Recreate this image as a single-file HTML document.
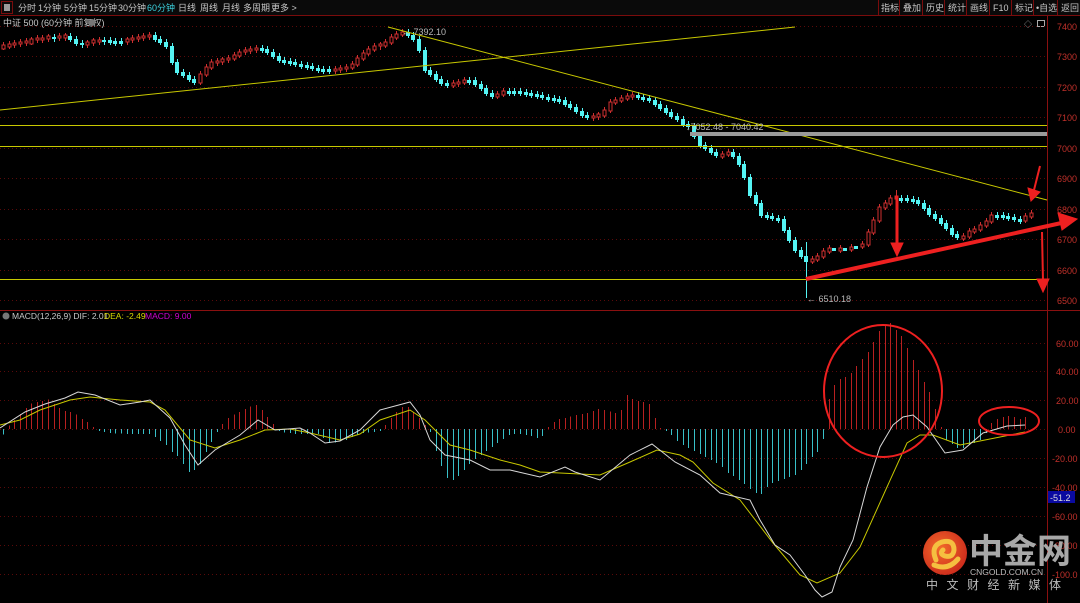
<!DOCTYPE html>
<html><head><meta charset="utf-8"><style>
html,body{margin:0;padding:0;background:#000;width:1080px;height:603px;overflow:hidden;font-family:"Liberation Sans","Noto Sans CJK SC",sans-serif}
svg{display:block}
</style></head><body>
<svg width="1080" height="603" xmlns="http://www.w3.org/2000/svg" font-family="Liberation Sans, Noto Sans CJK SC, sans-serif">
<rect width="1080" height="603" fill="#000"/>
<defs><radialGradient id="lg" cx="0.4" cy="0.4" r="0.7"><stop offset="0" stop-color="#f26a2a"/><stop offset="1" stop-color="#c9261b"/></radialGradient></defs>
<rect x="0" y="0" width="1080" height="15" fill="#0a0a0a"/>
<line x1="0" y1="15.5" x2="1080" y2="15.5" stroke="#7a0c0c"/>
<rect x="1.5" y="1.5" width="11" height="12" fill="none" stroke="#7a0c0c"/>
<rect x="4" y="4" width="6" height="7" fill="#999"/>
<g font-size="9" fill="#c8c8c8">
<text x="18" y="11">分时</text><text x="38" y="11">1分钟</text><text x="64" y="11">5分钟</text><text x="89" y="11">15分钟</text><text x="118" y="11">30分钟</text><text x="147" y="11" fill="#3cd4e0">60分钟</text><text x="178" y="11">日线</text><text x="200" y="11">周线</text><text x="222" y="11">月线</text><text x="243" y="11">多周期</text><text x="271" y="11">更多 &gt;</text>
<text x="881" y="11">指标</text><text x="903" y="11">叠加</text><text x="926" y="11">历史</text><text x="948" y="11">统计</text><text x="970" y="11">画线</text><text x="993" y="11">F10</text><text x="1015" y="11">标记</text><text x="1036" y="11">•自选</text><text x="1061" y="11">返回</text>
</g>
<g stroke="#7a0c0c"><line x1="878.5" y1="0" x2="878.5" y2="15"/><line x1="899.5" y1="0" x2="899.5" y2="15"/><line x1="922.5" y1="0" x2="922.5" y2="15"/><line x1="944.5" y1="0" x2="944.5" y2="15"/><line x1="966.5" y1="0" x2="966.5" y2="15"/><line x1="989.5" y1="0" x2="989.5" y2="15"/><line x1="1011.5" y1="0" x2="1011.5" y2="15"/><line x1="1033.5" y1="0" x2="1033.5" y2="15"/><line x1="1057.5" y1="0" x2="1057.5" y2="15"/></g>
<text x="3" y="26" font-size="9" fill="#c8c8c8">中证 500 (60分钟 前复权)</text>
<circle cx="92" cy="22.5" r="3.5" fill="#777"/>
<text x="1024" y="27" font-size="8" fill="#aaa">◇</text><rect x="1037.5" y="20.5" width="7" height="6" fill="none" stroke="#aaa"/>

<!-- grid -->
<g stroke="#5a0a0a" stroke-dasharray="1,3">
<line x1="0" y1="26.5" x2="1047" y2="26.5"/><line x1="0" y1="56.5" x2="1047" y2="56.5"/><line x1="0" y1="87.5" x2="1047" y2="87.5"/><line x1="0" y1="117.5" x2="1047" y2="117.5"/><line x1="0" y1="148.5" x2="1047" y2="148.5"/><line x1="0" y1="178.5" x2="1047" y2="178.5"/><line x1="0" y1="209.5" x2="1047" y2="209.5"/><line x1="0" y1="239.5" x2="1047" y2="239.5"/><line x1="0" y1="270.5" x2="1047" y2="270.5"/><line x1="0" y1="300.5" x2="1047" y2="300.5"/>
<line x1="0" y1="343.5" x2="1047" y2="343.5"/><line x1="0" y1="371.5" x2="1047" y2="371.5"/><line x1="0" y1="400.5" x2="1047" y2="400.5"/><line x1="0" y1="429.5" x2="1047" y2="429.5"/><line x1="0" y1="458.5" x2="1047" y2="458.5"/><line x1="0" y1="487.5" x2="1047" y2="487.5"/><line x1="0" y1="516.5" x2="1047" y2="516.5"/><line x1="0" y1="545.5" x2="1047" y2="545.5"/><line x1="0" y1="574.5" x2="1047" y2="574.5"/>
</g>
<g font-size="9" fill="#c0302a">
<text x="1057" y="30">7400</text><text x="1057" y="60">7300</text><text x="1057" y="91">7200</text><text x="1057" y="121">7100</text><text x="1057" y="152">7000</text><text x="1057" y="182">6900</text><text x="1057" y="213">6800</text><text x="1057" y="243">6700</text><text x="1057" y="274">6600</text><text x="1057" y="304">6500</text>
<text x="1056" y="347">60.00</text><text x="1056" y="375">40.00</text><text x="1056" y="404">20.00</text><text x="1058" y="433">0.00</text><text x="1052" y="462">-20.00</text><text x="1052" y="491">-40.00</text><text x="1052" y="520">-60.00</text><text x="1052" y="549">-80.00</text><text x="1052" y="578">-100.0</text>
</g>
<line x1="0" y1="310.5" x2="1080" y2="310.5" stroke="#8a1010"/>
<line x1="1047.5" y1="16" x2="1047.5" y2="603" stroke="#8a1010"/>

<!-- candles: wicks -->
<path stroke="#d03030" fill="none" d="M3.5,42V50M9.5,41V49M14.5,40V48M20.5,39V47M26.5,38V46M31.5,37V45M37.5,35V43M42.5,35V43M48.5,34V42M59.5,33V41M65.5,33V41M87.5,40V48M93.5,38V46M99.5,37V45M127.5,37V45M132.5,35V43M138.5,34V42M143.5,33V41M149.5,32V40M200.5,71V85M206.5,64V77M211.5,59V70M217.5,58V66M222.5,57V65M228.5,55V63M234.5,52V61M239.5,49V58M245.5,47V55M250.5,46V54M256.5,45V53M335.5,66V74M340.5,65V73M346.5,64V72M352.5,61V70M357.5,55V67M363.5,50V61M368.5,46V56M374.5,43V52M380.5,42V50M385.5,39V48M391.5,34V45M396.5,31V40M402.5,29V37M453.5,80V88M458.5,79V87M464.5,77V85M497.5,91V99M503.5,88V97M593.5,113V121M598.5,112V120M604.5,107V118M610.5,99V113M615.5,97V105M621.5,95V103M627.5,93V101M632.5,92V100M722.5,151V159M728.5,149V157M812.5,256V264M817.5,253V262M823.5,248V259M829.5,245V254M840.5,245V253M851.5,244V252M862.5,241V249M868.5,229V247M873.5,217V235M879.5,204V223M885.5,200V210M890.5,195V206M896.5,190V203M963.5,233V241M969.5,228V239M974.5,226V234M980.5,222V232M986.5,218V228M991.5,212V224M1025.5,213V223M1031.5,210V219"/>
<path stroke="#54f4f4" fill="none" d="M54.5,34V42M70.5,33V42M76.5,36V46M82.5,40V48M104.5,37V45M110.5,37V45M115.5,38V46M121.5,38V46M155.5,32V42M160.5,36V45M166.5,39V49M172.5,43V65M177.5,59V75M183.5,69V78M189.5,72V82M194.5,76V85M262.5,45V53M267.5,46V55M273.5,49V59M279.5,53V63M284.5,57V65M290.5,58V66M295.5,59V67M301.5,61V69M307.5,62V70M312.5,63V71M318.5,65V73M323.5,66V74M329.5,66V74M408.5,29V38M413.5,32V42M419.5,36V53M425.5,47V73M430.5,67V77M436.5,71V82M441.5,76V86M447.5,80V88M469.5,77V85M475.5,77V87M481.5,81V91M486.5,85V96M492.5,90V99M509.5,88V96M514.5,88V96M520.5,88V96M526.5,89V97M531.5,90V98M537.5,91V99M542.5,92V100M548.5,94V102M554.5,95V103M559.5,96V104M565.5,97V107M570.5,101V110M576.5,104V114M582.5,108V118M587.5,112V120M638.5,92V100M643.5,94V102M649.5,95V103M655.5,97V107M660.5,101V111M666.5,105V115M671.5,109V119M677.5,113V122M683.5,116V127M688.5,121V129M694.5,123V139M700.5,133V148M705.5,142V151M711.5,145V155M716.5,149V158M733.5,149V159M739.5,153V167M744.5,161V180M750.5,174V198M756.5,192V206M761.5,200V218M767.5,212V220M772.5,213V221M778.5,215V223M784.5,216V233M789.5,227V243M795.5,237V253M801.5,247V259M806.5,242V298M901.5,195V203M907.5,195V203M913.5,196V204M918.5,197V206M924.5,200V211M929.5,205V217M935.5,211V221M941.5,215V226M946.5,220V231M952.5,225V237M957.5,231V240M997.5,212V220M1003.5,212V220M1008.5,213V221M1014.5,214V222M1020.5,216V224"/>
<!-- red hollow bodies -->
<path stroke="#d03030" fill="#000" d="M2,45h3v4h-3zM8,44h3v3h-3zM13,43h3v2h-3zM19,42h3v2h-3zM25,41h3v2h-3zM30,39h3v5h-3zM36,38h3v2h-3zM41,38h3v2h-3zM47,36h3v3h-3zM58,36h3v2h-3zM64,35h3v3h-3zM86,42h3v3h-3zM92,40h3v3h-3zM98,40h3v2h-3zM126,39h3v3h-3zM131,38h3v2h-3zM137,37h3v2h-3zM142,36h3v2h-3zM148,35h3v2h-3zM199,74h3v9h-3zM205,67h3v8h-3zM210,62h3v6h-3zM216,61h3v2h-3zM221,59h3v3h-3zM227,58h3v2h-3zM233,55h3v4h-3zM238,52h3v4h-3zM244,50h3v2h-3zM249,49h3v2h-3zM255,48h3v2h-3zM334,69h3v2h-3zM339,68h3v2h-3zM345,67h3v2h-3zM351,64h3v4h-3zM356,58h3v7h-3zM362,53h3v6h-3zM367,49h3v5h-3zM373,46h3v4h-3zM379,44h3v2h-3zM384,42h3v4h-3zM390,37h3v6h-3zM395,34h3v4h-3zM401,32h3v3h-3zM452,83h3v3h-3zM457,82h3v2h-3zM463,80h3v3h-3zM496,94h3v3h-3zM502,91h3v4h-3zM592,116h3v2h-3zM597,114h3v3h-3zM603,110h3v6h-3zM609,102h3v9h-3zM614,100h3v3h-3zM620,98h3v3h-3zM626,96h3v3h-3zM631,95h3v2h-3zM721,154h3v3h-3zM727,152h3v3h-3zM811,259h3v3h-3zM816,256h3v4h-3zM822,251h3v6h-3zM828,248h3v4h-3zM839,248h3v3h-3zM850,247h3v3h-3zM861,244h3v3h-3zM867,232h3v13h-3zM872,220h3v13h-3zM878,207h3v14h-3zM884,203h3v5h-3zM889,198h3v6h-3zM895,196h3v3h-3zM962,236h3v3h-3zM968,231h3v6h-3zM973,229h3v3h-3zM979,225h3v5h-3zM985,221h3v5h-3zM990,215h3v7h-3zM1024,216h3v5h-3zM1030,213h3v4h-3z"/>
<!-- cyan bodies -->
<path fill="#54f4f4" d="M52,37h4v2h-4zM68,36h4v4h-4zM74,39h4v5h-4zM80,43h4v2h-4zM102,40h4v2h-4zM108,40h4v3h-4zM113,41h4v3h-4zM119,41h4v3h-4zM153,35h4v5h-4zM158,39h4v4h-4zM164,42h4v5h-4zM170,46h4v17h-4zM175,62h4v11h-4zM181,72h4v4h-4zM187,75h4v5h-4zM192,79h4v4h-4zM260,48h4v3h-4zM265,49h4v4h-4zM271,52h4v5h-4zM277,56h4v5h-4zM282,60h4v3h-4zM288,61h4v3h-4zM293,62h4v3h-4zM299,64h4v3h-4zM305,65h4v3h-4zM310,66h4v3h-4zM316,68h4v3h-4zM321,69h4v3h-4zM327,69h4v3h-4zM406,32h4v4h-4zM411,35h4v5h-4zM417,39h4v12h-4zM423,50h4v21h-4zM428,70h4v5h-4zM434,74h4v6h-4zM439,79h4v5h-4zM445,83h4v3h-4zM467,80h4v3h-4zM473,80h4v5h-4zM479,84h4v5h-4zM484,88h4v6h-4zM490,93h4v4h-4zM507,91h4v3h-4zM512,91h4v3h-4zM518,91h4v3h-4zM524,92h4v3h-4zM529,93h4v3h-4zM535,94h4v3h-4zM540,95h4v3h-4zM546,97h4v3h-4zM552,98h4v3h-4zM557,99h4v3h-4zM563,100h4v5h-4zM568,104h4v4h-4zM574,107h4v5h-4zM580,111h4v5h-4zM585,115h4v3h-4zM636,95h4v3h-4zM641,97h4v3h-4zM647,98h4v3h-4zM653,100h4v5h-4zM658,104h4v5h-4zM664,108h4v5h-4zM669,112h4v5h-4zM675,116h4v4h-4zM681,119h4v6h-4zM686,124h4v3h-4zM692,126h4v11h-4zM698,136h4v10h-4zM703,145h4v4h-4zM709,148h4v5h-4zM714,152h4v4h-4zM731,152h4v5h-4zM737,156h4v9h-4zM742,164h4v14h-4zM748,177h4v19h-4zM754,195h4v9h-4zM759,203h4v13h-4zM765,215h4v3h-4zM770,216h4v3h-4zM776,218h4v3h-4zM782,219h4v12h-4zM787,230h4v11h-4zM793,240h4v11h-4zM799,250h4v7h-4zM804,256h4v6h-4zM832,248h4v3h-4zM843,248h4v3h-4zM854,246h4v3h-4zM899,198h4v3h-4zM905,198h4v3h-4zM911,199h4v3h-4zM916,200h4v4h-4zM922,203h4v6h-4zM927,208h4v7h-4zM933,214h4v5h-4zM939,218h4v6h-4zM944,223h4v6h-4zM950,228h4v7h-4zM955,234h4v4h-4zM995,215h4v3h-4zM1001,215h4v3h-4zM1006,216h4v3h-4zM1012,217h4v3h-4zM1018,219h4v3h-4z"/>

<!-- yellow lines -->
<g stroke="#c8c800" stroke-width="1" fill="none">
<line x1="0" y1="110" x2="795" y2="27"/>
<line x1="388" y1="27" x2="1047" y2="200"/>
<line x1="0" y1="125.5" x2="1047" y2="125.5"/>
<line x1="0" y1="146.5" x2="1047" y2="146.5"/>
<line x1="0" y1="279.5" x2="1047" y2="279.5"/>
</g>
<rect x="690" y="132" width="357" height="4" fill="#9a9a9a"/>
<g font-size="9" fill="#b8b8b8">
<text x="402" y="35">← 7392.10</text>
<text x="686" y="130">↓7052.48 - 7040.42</text>
<text x="807" y="302">← 6510.18</text>
</g>

<!-- MACD histogram -->
<path stroke="#b82020" d="M9.5,429V425.5M14.5,429V420M20.5,429V414M26.5,429V408M31.5,429V403.5M37.5,429V402M42.5,429V401M48.5,429V399.5M54.5,429V404M59.5,429V408M65.5,429V411M70.5,429V412M76.5,429V414.5M82.5,429V419M87.5,429V422M93.5,429V427M222.5,429V424M228.5,429V418M234.5,429V414.5M239.5,429V412M245.5,429V409M250.5,429V406.5M256.5,429V405M262.5,429V410M267.5,429V417M273.5,429V424M385.5,429V425M391.5,429V418M396.5,429V412M402.5,429V407M408.5,429V407M413.5,429V412M419.5,429V418M425.5,429V425M548.5,429V427M554.5,429V422M559.5,429V419M565.5,429V418M570.5,429V416.5M576.5,429V415M582.5,429V414M587.5,429V413M593.5,429V411M598.5,429V409M604.5,429V410M610.5,429V411.5M615.5,429V413M621.5,429V410M627.5,429V395M632.5,429V399M638.5,429V401M643.5,429V402M649.5,429V404M655.5,429V418M660.5,429V428M829.5,429V399M834.5,429V385M840.5,429V379M845.5,429V377M851.5,429V373M856.5,429V366M862.5,429V359M868.5,429V352M873.5,429V342M879.5,429V331M885.5,429V326M890.5,429V323M896.5,429V330M901.5,429V336M907.5,429V348M913.5,429V360M918.5,429V370M924.5,429V382M929.5,429V392M935.5,429V409M941.5,429V427M991.5,429V423M997.5,429V419M1003.5,429V417M1008.5,429V416M1014.5,429V417M1020.5,429V419M1025.5,429V417"/>
<path stroke="#38c0c8" d="M3.5,429V434.5M99.5,429V431M104.5,429V432M110.5,429V433M115.5,429V433.5M121.5,429V433.5M127.5,429V434M132.5,429V434M138.5,429V434M143.5,429V434M149.5,429V434M155.5,429V437M160.5,429V441M166.5,429V445M172.5,429V452M177.5,429V456M183.5,429V464M189.5,429V472M194.5,429V470M200.5,429V464M206.5,429V452M211.5,429V442M217.5,429V432M279.5,429V431M284.5,429V432.5M290.5,429V433M295.5,429V434M301.5,429V434M307.5,429V434M312.5,429V434M318.5,429V434M323.5,429V438M329.5,429V443M335.5,429V442.5M340.5,429V441M346.5,429V440M352.5,429V437M357.5,429V435M363.5,429V433M368.5,429V432.5M374.5,429V432M380.5,429V431M430.5,429V432M436.5,429V451M441.5,429V466M447.5,429V478M453.5,429V480M458.5,429V476M464.5,429V470M469.5,429V464M475.5,429V459M481.5,429V455M486.5,429V451M492.5,429V447M497.5,429V443M503.5,429V439M509.5,429V435M514.5,429V434M520.5,429V434M526.5,429V435M531.5,429V436M537.5,429V438M542.5,429V436M666.5,429V431M671.5,429V435M677.5,429V441M683.5,429V445M688.5,429V448M694.5,429V451M700.5,429V454M705.5,429V457M711.5,429V460M716.5,429V463M722.5,429V467M728.5,429V473M733.5,429V476M739.5,429V480M744.5,429V484M750.5,429V489M756.5,429V493M761.5,429V494M767.5,429V487M772.5,429V483M778.5,429V481M784.5,429V479M789.5,429V477M795.5,429V475M801.5,429V470M806.5,429V464M812.5,429V457M817.5,429V452M823.5,429V439M946.5,429V440M952.5,429V444M957.5,429V448M963.5,429V448M969.5,429V445M974.5,429V443M980.5,429V440M986.5,429V433"/>
<polyline fill="none" stroke="#c8c800" points="0,425 20,420 40,410 70,400 90,397 120,400 150,402 165,410 190,440 215,448 240,440 265,430 290,429 310,433 340,440 360,434 380,420 410,410 425,420 450,445 470,450 500,460 520,465 540,472 600,475 630,462 657,450 680,455 693,462 713,483 740,500 773,543 800,575 817,583 840,573 860,547 887,487 907,443 920,435 933,435 960,445 1000,437 1025,432"/>
<polyline fill="none" stroke="#d8d8d8" points="0,428 25,412 45,404 65,398 78,392 95,395 120,405 140,402 150,400 170,418 185,445 198,465 215,450 240,435 258,420 275,430 300,428 310,433 325,443 340,441 360,430 380,410 395,406 410,402 420,415 430,440 445,455 470,460 490,470 510,470 540,477 565,467 575,472 600,480 630,455 652,444 675,462 700,475 720,493 750,500 760,520 775,545 790,555 805,575 815,590 822,597 832,592 840,567 853,540 867,487 880,447 893,425 903,417 913,415 927,427 945,453 963,450 983,433 1007,426 1025,425"/>

<circle cx="6" cy="316" r="3.5" fill="#777"/>
<text y="319" font-size="8.5"><tspan x="12" fill="#c8c8c8">MACD(12,26,9) DIF: 2.01</tspan><tspan x="104" fill="#d8d800">DEA: -2.49</tspan><tspan x="145" fill="#d000d0">MACD: 9.00</tspan></text>
<rect x="1048" y="491" width="27" height="12" fill="#0a0aa0"/>
<text x="1050" y="501" font-size="9" fill="#ddd">-51.2</text>

<g stroke="#ee2020" fill="none" stroke-width="2">
<ellipse cx="883" cy="391" rx="59" ry="66"/>
<ellipse cx="1009" cy="421" rx="30" ry="14"/>
</g>
<g fill="#ee2020" stroke="#ee2020">
<line x1="806" y1="279" x2="1066" y2="222" stroke-width="4"/>
<polygon points="1077,219 1058,213 1062,230"/>
<line x1="897" y1="196" x2="897" y2="245" stroke-width="3"/>
<polygon points="891,243 903,243 897,256"/>
<line x1="1040" y1="166" x2="1034" y2="190" stroke-width="2"/>
<polygon points="1028,188 1040,192 1031,201"/>
<line x1="1042" y1="232" x2="1043" y2="281" stroke-width="2"/>
<polygon points="1037,279 1049,279 1043,292"/>
</g>
<circle cx="945" cy="553" r="22" fill="url(#lg)"/>
<path d="M936,560 q-6,-14 6,-18 q12,-3 12,8 q-1,8 -9,6 q-6,-2 -2,-6 M934,565 q14,6 24,-6" stroke="#f5c040" stroke-width="5" fill="none" stroke-linecap="round"/>
<text x="969" y="563" font-size="34" font-weight="bold" fill="#a8a8a8" font-family="Noto Sans CJK SC, sans-serif">中金网</text>
<text x="970" y="575" font-size="8.5" fill="#bbb">CNGOLD.COM.CN</text>
<text x="926" y="589" font-size="12" fill="#bbb" letter-spacing="8.5" font-family="Noto Sans CJK SC, sans-serif">中文财经新媒体</text>
</svg>
</body></html>
